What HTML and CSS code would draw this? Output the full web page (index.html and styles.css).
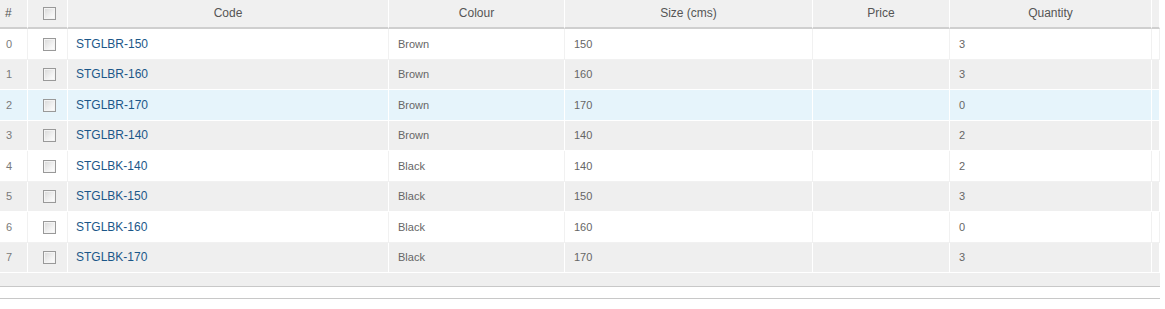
FILE: index.html
```html
<!DOCTYPE html>
<html>
<head>
<meta charset="utf-8">
<link rel="stylesheet" href="styles.css">
</head>
<body>
<table class="grid">
  <thead>
    <tr>
      <th class="c-num">#</th>
      <th class="c-chk"><input type="checkbox" class="cb"></th>
      <th class="c-code">Code</th>
      <th class="c-colour">Colour</th>
      <th class="c-size">Size (cms)</th>
      <th class="c-price">Price</th>
      <th class="c-qty">Quantity</th>
      <th class="c-end"></th>
    </tr>
  </thead>
  <tbody>
    <tr class="r-white"><td class="num">0</td><td class="chk"><input type="checkbox" class="cb"></td><td><a href="#">STGLBR-150</a></td><td>Brown</td><td>150</td><td></td><td>3</td><td></td></tr>
    <tr class="r-grey"><td class="num">1</td><td class="chk"><input type="checkbox" class="cb"></td><td><a href="#">STGLBR-160</a></td><td>Brown</td><td>160</td><td></td><td>3</td><td></td></tr>
    <tr class="r-hover"><td class="num">2</td><td class="chk"><input type="checkbox" class="cb"></td><td><a href="#">STGLBR-170</a></td><td>Brown</td><td>170</td><td></td><td>0</td><td></td></tr>
    <tr class="r-grey"><td class="num">3</td><td class="chk"><input type="checkbox" class="cb"></td><td><a href="#">STGLBR-140</a></td><td>Brown</td><td>140</td><td></td><td>2</td><td></td></tr>
    <tr class="r-white"><td class="num">4</td><td class="chk"><input type="checkbox" class="cb"></td><td><a href="#">STGLBK-140</a></td><td>Black</td><td>140</td><td></td><td>2</td><td></td></tr>
    <tr class="r-grey"><td class="num">5</td><td class="chk"><input type="checkbox" class="cb"></td><td><a href="#">STGLBK-150</a></td><td>Black</td><td>150</td><td></td><td>3</td><td></td></tr>
    <tr class="r-white"><td class="num">6</td><td class="chk"><input type="checkbox" class="cb"></td><td><a href="#">STGLBK-160</a></td><td>Black</td><td>160</td><td></td><td>0</td><td></td></tr>
    <tr class="r-grey"><td class="num">7</td><td class="chk"><input type="checkbox" class="cb"></td><td><a href="#">STGLBK-170</a></td><td>Black</td><td>170</td><td></td><td>3</td><td></td></tr>
  </tbody>
  <tfoot>
    <tr><td colspan="8" class="foot"></td></tr>
  </tfoot>
</table>
<div class="rule"></div>
</body>
</html>
```
FILE: styles.css
```css
html, body {
  margin: 0;
  padding: 0;
  background: #fff;
  font-family: "Liberation Sans", Arial, sans-serif;
}

.grid {
  width: 1160px;
  table-layout: fixed;
  border-collapse: separate;
  border-spacing: 0;
}

.grid th {
  box-sizing: border-box;
  height: 29px;
  background: #f0f0f0;
  border-right: 1px solid #fff;
  border-bottom: 2px solid #cfcfcf;
  font-size: 12px;
  font-weight: normal;
  color: #555;
  text-align: center;
  vertical-align: middle;
  padding: 0 0 1px 0;
}

.grid th.c-num { text-align: left; padding-left: 5px; }
.grid th.c-chk { padding-left: 4px; }

.c-num { width: 28px; }
.c-chk { width: 40px; }
.c-code { width: 321px; }
.c-colour { width: 176px; }
.c-size { width: 248px; }
.c-price { width: 137px; }
.c-qty { width: 202px; }
.c-end { width: 8px; }

.grid td {
  box-sizing: border-box;
  height: 30.5px;
  padding: 0 0 0 9px;
  border-right: 1px solid #fff;
  border-bottom: 1px solid #fff;
  font-size: 11px;
  color: #666;
  vertical-align: middle;
  white-space: nowrap;
  overflow: hidden;
}

.grid td.num { padding-left: 6px; color: #7a7a7a; }
.grid td.chk { padding: 0 0 0 4px; text-align: center; }

.grid td a {
  font-size: 12px;
  color: #1b5789;
  text-decoration: none;
  margin-left: -1px;
}

.r-white td { background: #fff; border-color: #f1f1f1; }
.r-grey td { background: #efefef; }
.r-hover td { background: #e6f4fb; }

.grid td.foot {
  height: 14px;
  padding: 0;
  background: #efefef;
  border-right: 0;
  border-bottom: 1px solid #c8c8c8;
}

.cb {
  -webkit-appearance: none;
  appearance: none;
  display: inline-block;
  box-sizing: border-box;
  width: 13px;
  height: 13px;
  margin: 0;
  vertical-align: middle;
  border: 1px solid #999;
  background: linear-gradient(135deg, #d8d8d8 0%, #f2f2f2 60%, #ffffff 100%);
  box-shadow: inset 0 0 0 1px #f4f4f4;
}

.rule {
  width: 1160px;
  margin-top: 11px;
  border-top: 1px solid #c8c8c8;
}
```
